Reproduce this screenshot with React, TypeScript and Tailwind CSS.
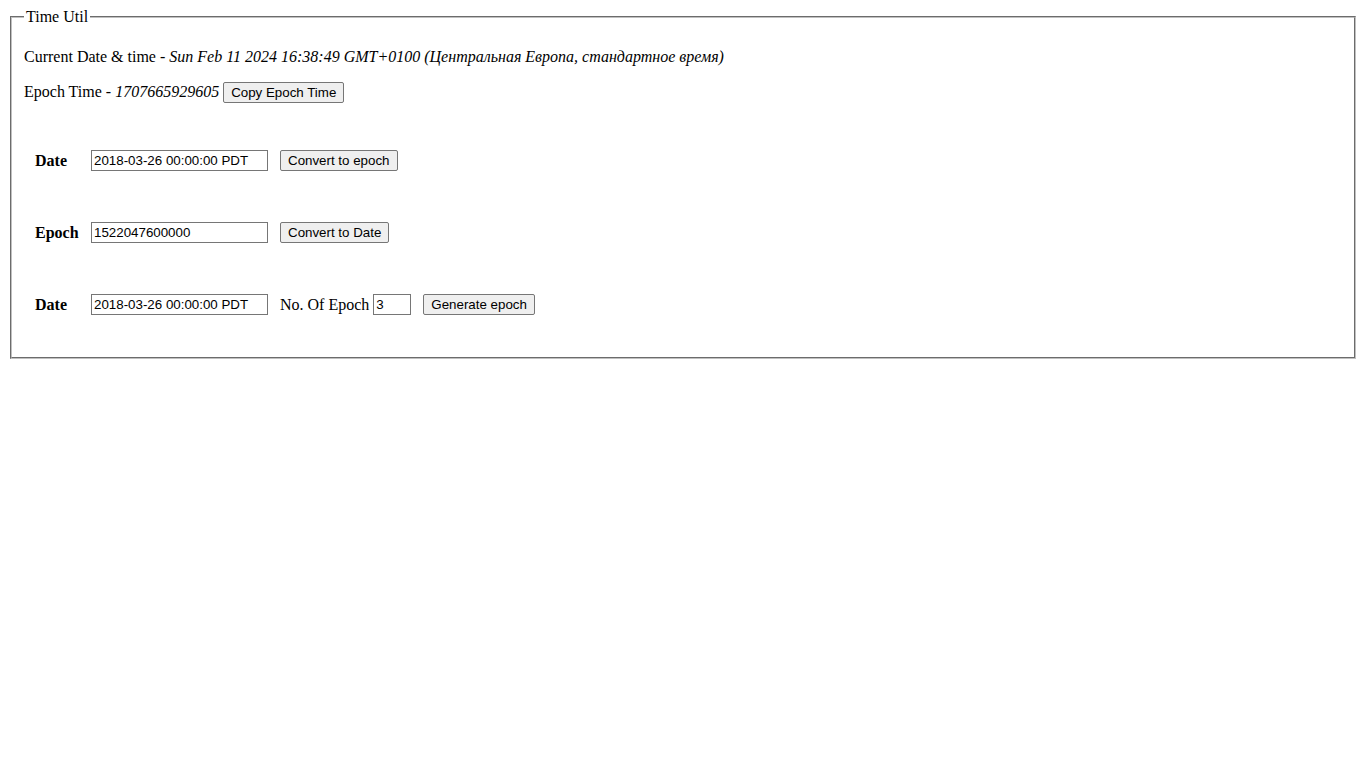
import React from "react";

const btn =
  "h-[21px] px-[7px] border border-[#767676] rounded-[2px] bg-[#efefef] text-[13.33px] leading-[normal] font-['Liberation_Sans',Arial,sans-serif] text-black";
const inp =
  "h-[21px] px-[2px] border border-[#767676] bg-white text-[13.33px] leading-[normal] font-['Liberation_Sans',Arial,sans-serif] text-black outline-none";

export default function App() {
  return (
    <div className="m-2 font-['Liberation_Serif','Times_New_Roman',serif] text-[16px] leading-[normal] text-black bg-white">
      <fieldset className="mx-[2px] border-2 [border-style:groove] border-[#c0c0c0] pt-[0.35em] px-[0.75em] pb-[0.625em]">
        <legend className="px-[2px]">Time Util</legend>
        <p className="my-4">
          Current Date &amp; time -{" "}
          <i>Sun Feb 11 2024 16:38:49 GMT+0100 (Центральная Европа, стандартное время)</i>
        </p>
        <p className="my-4 flex items-center">
          <span className="whitespace-pre">Epoch Time - </span>
          <i>1707665929605</i>
          <button className={btn + " ml-[4px]"}>Copy Epoch Time</button>
        </p>
        <div className="pt-[6px] pb-[6px]">
          <div className="flex items-center h-[72px] pl-[11px]">
            <b className="w-[56px]">Date</b>
            <input className={inp + " w-[177px]"} defaultValue="2018-03-26 00:00:00 PDT" />
            <button className={btn + " ml-[12px]"}>Convert to epoch</button>
          </div>
          <div className="flex items-center h-[72px] pl-[11px]">
            <b className="w-[56px]">Epoch</b>
            <input className={inp + " w-[177px]"} defaultValue="1522047600000" />
            <button className={btn + " ml-[12px]"}>Convert to Date</button>
          </div>
          <div className="flex items-center h-[72px] pl-[11px]">
            <b className="w-[56px]">Date</b>
            <input className={inp + " w-[177px]"} defaultValue="2018-03-26 00:00:00 PDT" />
            <span className="ml-[12px] whitespace-pre">No. Of Epoch </span>
            <input className={inp + " w-[38px]"} defaultValue="3" />
            <button className={btn + " ml-[12px]"}>Generate epoch</button>
          </div>
        </div>
      </fieldset>
    </div>
  );
}
